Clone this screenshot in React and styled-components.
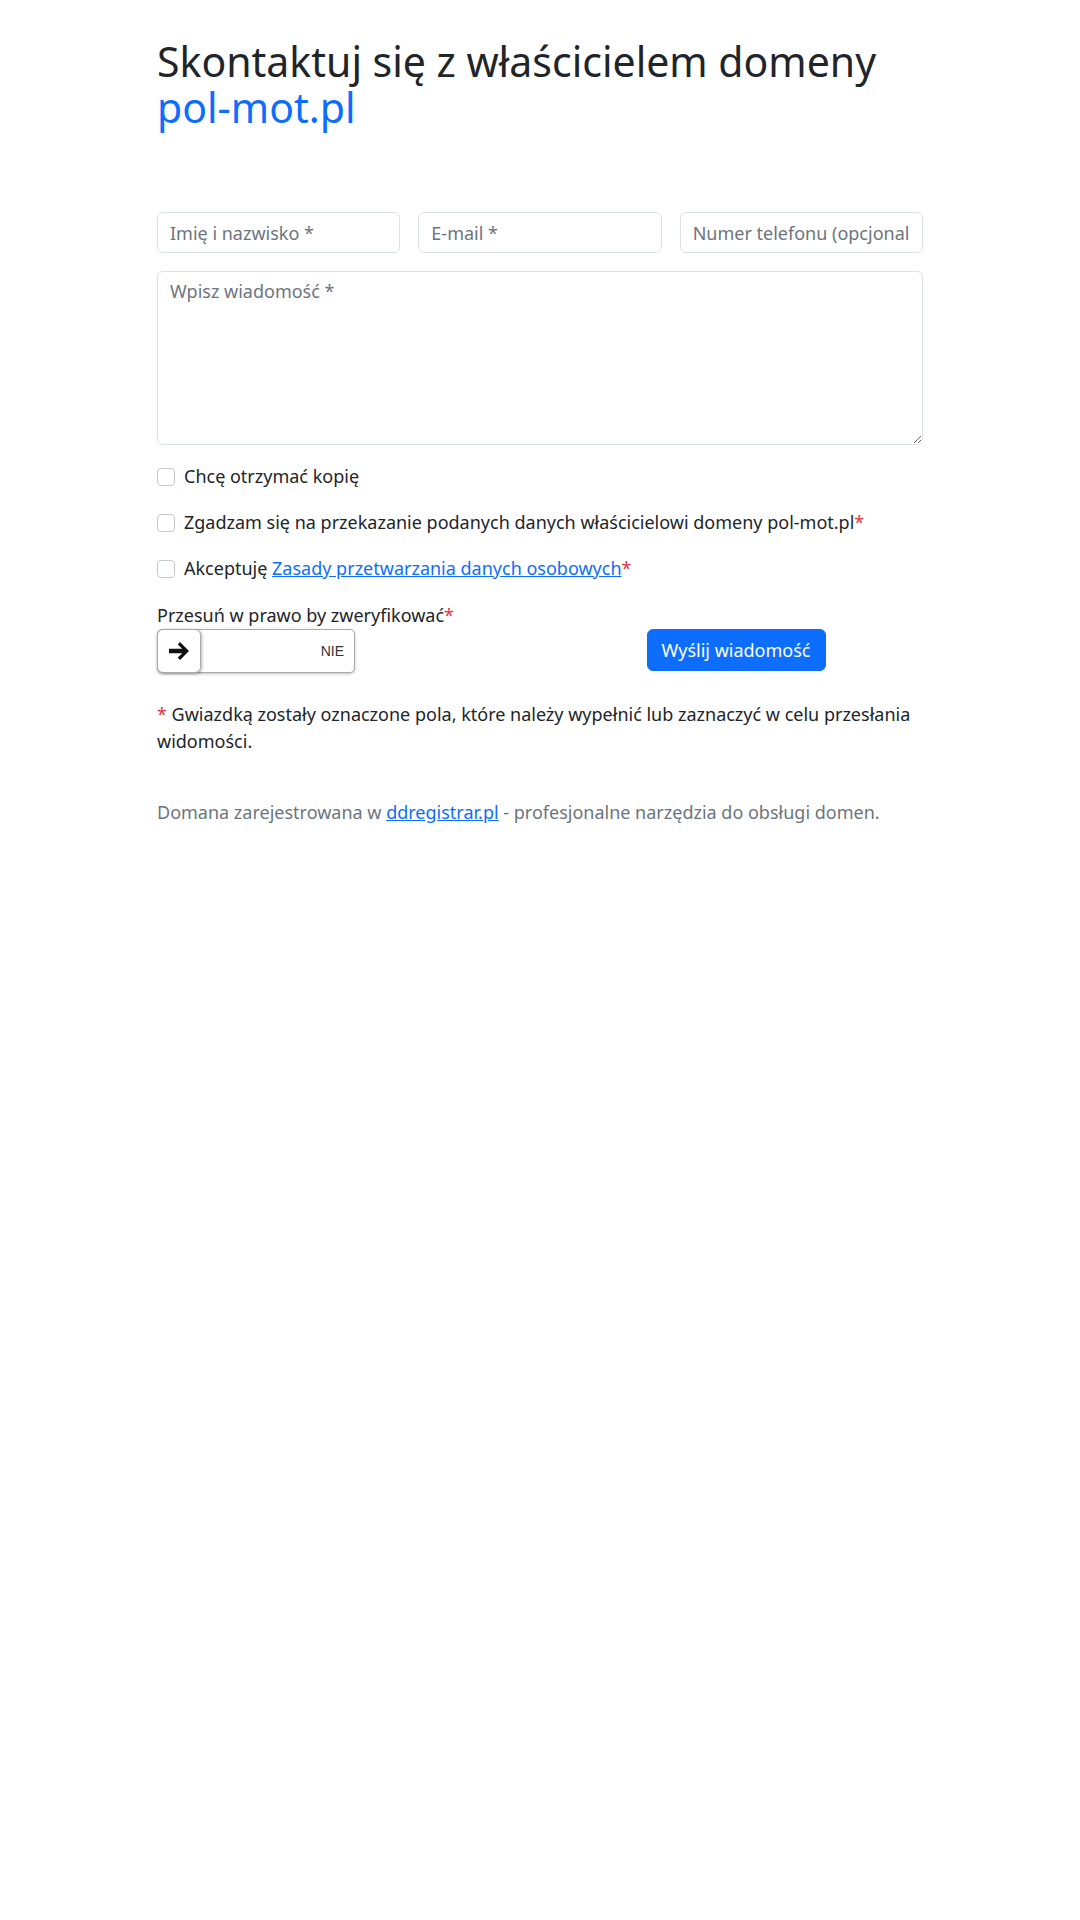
import React from "react";
import styled, { createGlobalStyle } from "styled-components";

const GlobalStyle = createGlobalStyle`
  * { box-sizing: border-box; }
  body {
    margin: 0;
    background: #ffffff;
    color: #212529;
    font-family: "Noto Sans", "Open Sans", Arial, sans-serif;
    font-size: 18px;
    line-height: 1.5;
  }
`;

const Container = styled.main`
  width: 766px;
  margin: 0 auto;
  padding-top: 38px;
`;

const Title = styled.h1`
  margin: 0;
  font-size: 41px;
  line-height: 46px;
  font-weight: 400;
  color: #212529;
`;

const Domain = styled.span`
  display: block;
  color: #0d6efd;
`;

const Form = styled.form`
  margin-top: 82px;
`;

const InputRow = styled.div`
  display: grid;
  grid-template-columns: repeat(3, 1fr);
  gap: 18px;
`;

const fieldStyles = `
  display: block;
  width: 100%;
  border: 1px solid #dee2e6;
  border-radius: 6px;
  padding: 6px 12px;
  font: inherit;
  font-size: 18px;
  line-height: 27px;
  color: #212529;
  background: #fff;
  outline: none;
  &::placeholder { color: #6c757d; opacity: 1; }
`;

const Input = styled.input`
  ${fieldStyles}
  height: 41px;
`;

const TextArea = styled.textarea`
  ${fieldStyles}
  margin-top: 18px;
  height: 174px;
  resize: vertical;
`;

const CheckList = styled.div`
  margin-top: 18px;
  display: flex;
  flex-direction: column;
  gap: 19px;
`;

const CheckRow = styled.label`
  display: flex;
  align-items: center;
  gap: 9px;
  height: 27px;
  cursor: pointer;
`;

const Checkbox = styled.input.attrs({ type: "checkbox" })`
  appearance: none;
  margin: 0;
  width: 18px;
  height: 18px;
  flex: none;
  border: 1px solid #c4c8cc;
  border-radius: 4px;
  background: #fff;
`;

const Req = styled.span`
  color: #dc3545;
`;

const Link = styled.a`
  color: #0d6efd;
  text-decoration: underline;
`;

const VerifyRow = styled.div`
  margin-top: 20px;
  display: grid;
  grid-template-columns: 1fr 1fr;
  gap: 18px;
  align-items: end;
`;

const VerifyCol = styled.div`
  display: flex;
  flex-direction: column;
`;

const VerifyLabel = styled.div`
  line-height: 27px;
`;

const SliderTrack = styled.div`
  position: relative;
  width: 198px;
  height: 44px;
  border: 1px solid #aaaaaa;
  border-radius: 5px;
  background: #fff;
  box-shadow: 0 1px 3px rgba(0, 0, 0, 0.25);
  display: flex;
  align-items: center;
  justify-content: flex-end;
  padding-right: 10px;
`;

const SliderText = styled.span`
  font-family: "Liberation Sans", Arial, sans-serif;
  font-size: 14px;
  color: #333;
`;

const Knob = styled.div`
  position: absolute;
  left: -1px;
  top: -1px;
  width: 44px;
  height: 44px;
  border: 1px solid #aaaaaa;
  border-radius: 6px;
  background: #fff;
  box-shadow: 1px 1px 3px rgba(0, 0, 0, 0.3);
  display: flex;
  align-items: center;
  justify-content: center;
`;

const ButtonCol = styled.div`
  display: flex;
  justify-content: center;
  padding-bottom: 2px;
`;

const SubmitButton = styled.button`
  height: 42px;
  padding: 0 14px;
  border: 1px solid #0d6efd;
  border-radius: 6px;
  background: #0d6efd;
  color: #fff;
  font: inherit;
  font-size: 18px;
  cursor: pointer;
`;

const Note = styled.p`
  margin: 28px 0 0;
`;

const Footer = styled.p`
  margin: 44px 0 0;
  color: #6c757d;
`;

export default function App() {
  return (
    <>
      <GlobalStyle />
      <Container>
        <Title>
          Skontaktuj się z właścicielem domeny
          <Domain>pol-mot.pl</Domain>
        </Title>
        <Form onSubmit={(e) => e.preventDefault()}>
          <InputRow>
            <Input placeholder="Imię i nazwisko *" />
            <Input placeholder="E-mail *" />
            <Input placeholder="Numer telefonu (opcjonalnie)" />
          </InputRow>
          <TextArea placeholder="Wpisz wiadomość *" />
          <CheckList>
            <CheckRow>
              <Checkbox />
              Chcę otrzymać kopię
            </CheckRow>
            <CheckRow>
              <Checkbox />
              <span>
                Zgadzam się na przekazanie podanych danych właścicielowi domeny pol-mot.pl<Req>*</Req>
              </span>
            </CheckRow>
            <CheckRow>
              <Checkbox />
              <span>
                Akceptuję <Link href="#">Zasady przetwarzania danych osobowych</Link>
                <Req>*</Req>
              </span>
            </CheckRow>
          </CheckList>
          <VerifyRow>
            <VerifyCol>
              <VerifyLabel>
                Przesuń w prawo by zweryfikować<Req>*</Req>
              </VerifyLabel>
              <SliderTrack>
                <Knob>
                  <svg width="22" height="18" viewBox="0 0 22 18">
                    <path d="M1 6.8h13.2L9.8 2.4 12 0l9 9-9 9-2.2-2.4 4.4-4.4H1z" fill="#111" />
                  </svg>
                </Knob>
                <SliderText>NIE</SliderText>
              </SliderTrack>
            </VerifyCol>
            <ButtonCol>
              <SubmitButton type="submit">Wyślij wiadomość</SubmitButton>
            </ButtonCol>
          </VerifyRow>
          <Note>
            <Req>*</Req> Gwiazdką zostały oznaczone pola, które należy wypełnić lub zaznaczyć w celu przesłania widomości.
          </Note>
          <Footer>
            Domana zarejestrowana w <Link href="#">ddregistrar.pl</Link> - profesjonalne narzędzia do obsługi domen.
          </Footer>
        </Form>
      </Container>
    </>
  );
}
